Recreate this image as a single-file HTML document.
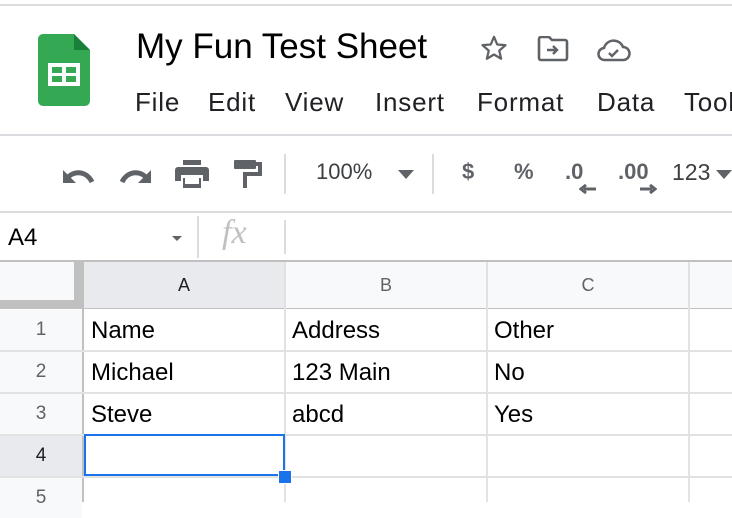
<!DOCTYPE html>
<html><head><style>
body{margin:0;width:732px;height:502px;overflow:hidden;background:#fff;position:relative;font-family:"Liberation Sans",Arial,sans-serif}
.a{position:absolute}
.hl{position:absolute;left:0;width:732px;height:2px;background:#dadce0}
.menu span{position:absolute;top:87px;font-size:26px;letter-spacing:0.8px;color:#202124}
.tb{position:absolute;color:#5f6368;font-size:22px;font-weight:bold}
.cell{position:absolute;font-size:24px;color:#000}
.rn{position:absolute;left:0;width:82px;text-align:center;font-size:19px;color:#5f6368;background:#f8f9fa}
.ch{position:absolute;top:262px;height:46px;line-height:46px;text-align:center;font-size:18px;color:#5f6368;background:#f8f9fa}
</style></head><body>
<div class="hl" style="top:4px"></div>
<svg class="a" style="left:38px;top:34px" width="52" height="72" viewBox="0 0 52 72">
<path d="M5 0H36L52 16V67a5 5 0 0 1-5 5H5a5 5 0 0 1-5-5V5a5 5 0 0 1 5-5z" fill="#34a853"/>
<path d="M36 0L52 16H36z" fill="#188038"/>
<rect x="10" y="29" width="32" height="23" fill="#fff"/>
<rect x="14" y="33" width="10" height="6" fill="#34a853"/><rect x="28" y="33" width="10" height="6" fill="#34a853"/>
<rect x="14" y="42" width="10" height="6" fill="#34a853"/><rect x="28" y="42" width="10" height="6" fill="#34a853"/>
</svg>
<div class="a" style="left:136px;top:27px;font-size:35px;color:#000">My Fun Test Sheet</div>
<svg class="a" style="left:478px;top:33px" width="32" height="30" viewBox="0 0 24 24"><path d="M12 3l2.6 6.2 6.6.5-5 4.4 1.5 6.5L12 17.2 6.3 20.6l1.5-6.5-5-4.4 6.6-.5z" fill="none" stroke="#5f6368" stroke-width="1.8" stroke-linejoin="round"/></svg>
<svg class="a" style="left:537px;top:36px" width="32" height="26" viewBox="0 0 32 26"><path d="M2 3a2 2 0 0 1 2-2h8l3 3h13a2 2 0 0 1 2 2v16a2 2 0 0 1-2 2H4a2 2 0 0 1-2-2z" fill="none" stroke="#5f6368" stroke-width="2.6"/><path d="M10 14h10M16 10l4 4-4 4" fill="none" stroke="#5f6368" stroke-width="2.4"/></svg>
<svg class="a" style="left:597px;top:38px" width="34" height="24" viewBox="0 0 34 24"><path d="M8 22a6 6 0 0 1-1-12A10 10 0 0 1 26 9a6.5 6.5 0 0 1 0 13z" fill="none" stroke="#5f6368" stroke-width="2.5"/><path d="M12 15l3 3 6-6" fill="none" stroke="#5f6368" stroke-width="2.4"/></svg>
<div class="menu"><span style="left:135px">File</span><span style="left:208px">Edit</span><span style="left:285px">View</span><span style="left:375px">Insert</span><span style="left:477px">Format</span><span style="left:597px">Data</span><span style="left:684px">Tools</span></div>
<div class="hl" style="top:134px"></div>
<svg class="a" style="left:62px;top:164px" width="34" height="22" viewBox="0 0 34 22"><path d="M4 16C10 6 24 6 30 18" fill="none" stroke="#5f6368" stroke-width="5"/><path d="M1 6v13h13z" fill="#5f6368"/></svg>
<svg class="a" style="left:118px;top:164px" width="34" height="22" viewBox="0 0 34 22"><path d="M30 16C24 6 10 6 4 18" fill="none" stroke="#5f6368" stroke-width="5"/><path d="M33 6v13H20z" fill="#5f6368"/></svg>
<svg class="a" style="left:175px;top:159px" width="34" height="30" viewBox="0 0 34 30"><rect x="8" y="1" width="18" height="5" fill="#5f6368"/><path d="M3 8h28a3 3 0 0 1 3 3v11h-6v-6H6v6H0V11a3 3 0 0 1 3-3z" fill="#5f6368"/><rect x="8" y="19" width="18" height="10" fill="#5f6368"/><rect x="10" y="19" width="14" height="6" fill="#fff"/></svg>
<svg class="a" style="left:234px;top:159px" width="28" height="30" viewBox="0 0 28 30"><rect x="0" y="1" width="22" height="9" rx="1" fill="#5f6368"/><path d="M22 5h4v10H11v14" fill="none" stroke="#5f6368" stroke-width="4"/></svg>
<div class="a" style="left:284px;top:154px;width:2px;height:40px;background:#dadce0"></div>
<div class="tb" style="left:316px;top:159px;font-weight:normal;color:#3c4043">100%</div>
<svg class="a" style="left:398px;top:170px" width="16" height="9"><path d="M0 0h16L8 9z" fill="#5f6368"/></svg>
<div class="a" style="left:432px;top:154px;width:2px;height:40px;background:#dadce0"></div>
<div class="tb" style="left:462px;top:159px">$</div>
<div class="tb" style="left:514px;top:159px">%</div>
<div class="tb" style="left:565px;top:159px">.0</div>
<div class="tb" style="left:618px;top:159px">.00</div>
<svg class="a" style="left:579px;top:184px" width="18" height="10"><path d="M17 5H5M7 1L2 5l5 4" fill="none" stroke="#5f6368" stroke-width="3"/></svg>
<svg class="a" style="left:639px;top:184px" width="18" height="10"><path d="M1 5h12M11 1l5 4-5 4" fill="none" stroke="#5f6368" stroke-width="3"/></svg>
<div class="tb" style="left:672px;top:159px;font-weight:normal;color:#3c4043;font-size:23px">123</div>
<svg class="a" style="left:716px;top:170px" width="16" height="9"><path d="M0 0h16L8 9z" fill="#5f6368"/></svg>
<div class="hl" style="top:211px"></div>
<div class="a" style="left:8px;top:224px;font-size:24px;color:#000">A4</div>
<svg class="a" style="left:172px;top:236px" width="10" height="5"><path d="M0 0h10L5 5z" fill="#5f6368"/></svg>
<div class="a" style="left:197px;top:216px;width:2px;height:42px;background:#dadce0"></div>
<div class="a" style="left:222px;top:214px;font-size:34px;font-style:italic;color:#c0c0c0;font-family:'Liberation Serif',serif">fx</div>
<div class="a" style="left:284px;top:220px;width:2px;height:34px;background:#dadce0"></div>
<div class="hl" style="top:260px;background:#c0c0c0"></div>
<div class="a" style="left:0;top:262px;width:74px;height:38px;background:#f8f9fa"></div>
<div class="a" style="left:74px;top:262px;width:8px;height:47px;background:#c0c0c0"></div>
<div class="a" style="left:0;top:300px;width:82px;height:9px;background:#c0c0c0"></div>
<div class="ch" style="left:84px;width:200px;background:#e8eaed;color:#202124">A</div>
<div class="ch" style="left:286px;width:200px">B</div>
<div class="ch" style="left:488px;width:200px">C</div>
<div class="ch" style="left:690px;width:42px"></div>
<div class="a" style="left:84px;top:308px;width:648px;height:1px;background:#c0c0c0"></div>
<div class="rn" style="top:310px;height:40px;line-height:40px">1</div>
<div class="rn" style="top:352px;height:40px;line-height:40px">2</div>
<div class="rn" style="top:394px;height:40px;line-height:40px">3</div>
<div class="rn" style="top:436px;height:40px;line-height:40px;background:#e8eaed;color:#202124">4</div>
<div class="rn" style="top:478px;height:40px;line-height:40px">5</div>
<div class="a" style="left:82px;top:262px;width:2px;height:240px;background:#c0c0c0"></div>
<div class="a" style="left:284px;top:262px;width:2px;height:240px;background:#e2e2e2"></div>
<div class="a" style="left:486px;top:262px;width:2px;height:240px;background:#e2e2e2"></div>
<div class="a" style="left:688px;top:262px;width:2px;height:240px;background:#e2e2e2"></div>
<div class="a" style="left:0;top:350px;width:732px;height:2px;background:#e2e2e2"></div>
<div class="a" style="left:0;top:392px;width:732px;height:2px;background:#e2e2e2"></div>
<div class="a" style="left:0;top:434px;width:732px;height:2px;background:#e2e2e2"></div>
<div class="a" style="left:0;top:476px;width:732px;height:2px;background:#e2e2e2"></div>
<div class="cell" style="left:91px;top:317px">Name</div>
<div class="cell" style="left:292px;top:317px">Address</div>
<div class="cell" style="left:494px;top:317px">Other</div>
<div class="cell" style="left:91px;top:359px">Michael</div>
<div class="cell" style="left:292px;top:359px">123 Main</div>
<div class="cell" style="left:494px;top:359px">No</div>
<div class="cell" style="left:91px;top:401px">Steve</div>
<div class="cell" style="left:292px;top:401px">abcd</div>
<div class="cell" style="left:494px;top:401px">Yes</div>
<div class="a" style="left:84px;top:434px;width:197px;height:38px;border:2px solid #1a73e8"></div>
<div class="a" style="left:278px;top:470px;width:12px;height:12px;background:#1a73e8;border:1px solid #fff"></div>
</body></html>
